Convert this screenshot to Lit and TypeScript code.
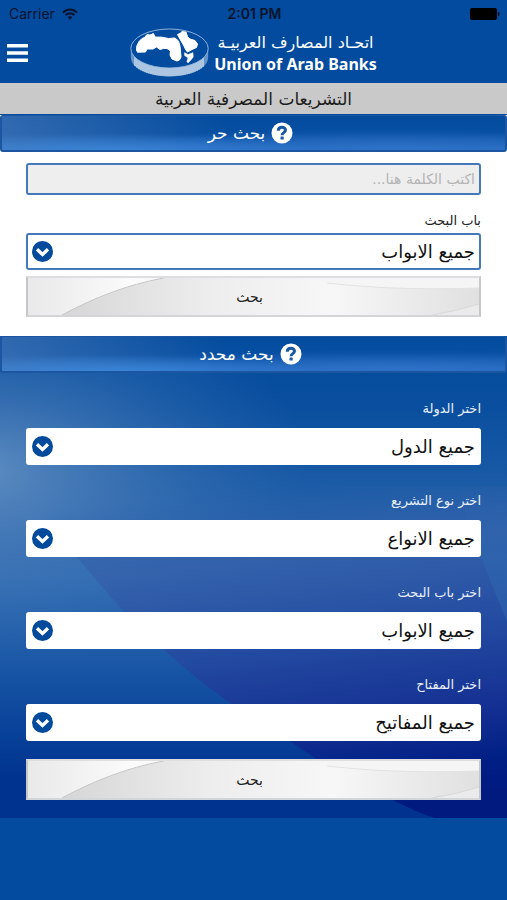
import { LitElement, html, css, svg } from "lit";
import { customElement, property } from "lit/decorators.js";

const base = css`
  :host {
    display: block;
    box-sizing: border-box;
    font-family: "DejaVu Sans", "Noto Sans", sans-serif;
  }
  *,
  *::before,
  *::after {
    box-sizing: border-box;
  }
`;

@customElement("status-bar")
class StatusBar extends LitElement {
  static styles = [
    base,
    css`
      .bar {
        display: grid;
        grid-template-columns: 1fr auto 1fr;
        align-items: center;
        height: 27px;
        padding: 0 7px 0 9px;
        font: 14px/20px Inter, sans-serif;
        color: #06142c;
      }
      .carrier {
        display: flex;
        align-items: center;
        gap: 7px;
      }
      .time {
        font-weight: 600;
      }
      .battery {
        justify-self: end;
      }
      svg {
        display: block;
      }
    `,
  ];

  render() {
    return html`
      <div class="bar">
        <span class="carrier">
          Carrier
          <svg width="16" height="12" viewBox="0 0 16 12" fill="none" stroke="#06142c" stroke-width="2" aria-hidden="true">
            <path d="M1 4.6C5 .4 11 .4 15 4.6" />
            <path d="M3.6 7.2C6.2 4.7 9.8 4.7 12.4 7.2" />
            <path d="M8 11.8 5.6 9.2C7 7.9 9 7.9 10.4 9.2Z" fill="#06142c" stroke="none" />
          </svg>
        </span>
        <span class="time">2:01 PM</span>
        <svg class="battery" width="30" height="12" viewBox="0 0 30 12" aria-hidden="true">
          <rect x="0" y="0" width="27" height="12" rx="2" fill="#000" />
          <path d="M28 4c2 .6 2 3.4 0 4z" fill="#000" />
        </svg>
      </div>
    `;
  }
}

@customElement("bank-header")
class BankHeader extends LitElement {
  static styles = [
    base,
    css`
      .header {
        display: grid;
        grid-template-columns: 1fr auto 1fr;
        align-items: center;
        height: 56px;
        padding: 0 7px 4px;
      }
      .menu {
        justify-self: start;
        padding: 0;
        border: 0;
        background: none;
        cursor: pointer;
      }
      svg {
        display: block;
      }
      .brand {
        display: flex;
        align-items: center;
        gap: 5px;
        color: #fff;
        text-decoration: none;
      }
      .names {
        display: flex;
        flex-direction: column;
        align-items: center;
        white-space: nowrap;
      }
      .arabic {
        font-size: 16px;
        line-height: 22px;
      }
      .english {
        font: 700 16px/20px "Noto Sans", sans-serif;
      }
    `,
  ];

  render() {
    const ridges = Array.from({ length: 35 }, (_, i) => {
      const x = 5 + i * 2;
      const t = (x - 39.5) / 38.7;
      const y = 20.5 + 19 * Math.sqrt(1 - t * t);
      return svg`<path d="M${x} ${y.toFixed(1)}v9" />`;
    });
    return html`
      <header class="header">
        <button class="menu" aria-label="القائمة">
          <svg width="21" height="18" viewBox="0 0 21 18" fill="#fff">
            <path d="M0 0h21v3.6H0zM0 7.2h21v3.6H0zM0 14.4h21V18H0z" />
          </svg>
        </button>
        <a class="brand" href="#">
          <svg width="79" height="50" viewBox="0 0 79 50" aria-hidden="true">
            <path d="M.8 20.5v8.500C.8 54.500 78.200 54.500 78.200 29v-8.500A38.700 19.500 0 0 1 .8 20.500Z" fill="#8fb2da" opacity=".7" />
            <g stroke="#f4f8fc" stroke-width="1">${ridges}</g>
            <ellipse cx="39.5" cy="20.5" rx="38.7" ry="19.5" fill="#024b9e" stroke="#9dbce0" stroke-width=".9" />
            <g fill="#fff" stroke="#fff" stroke-linejoin="round">
              <path
                d="M6.800 18 9 13.500 12 10.500 14.500 9.500 17 6.500 20 7 23.500 5.500 25 9 32 9.200 38.500 10.500 45 10 48.500 13 50 18 50.500 23 51 29 49.500 32 47 33 42 31 40 27 40.500 23 37 20.500 33.500 20.500 30 21.500 26.500 19 23 21 17 21 15.500 24 7.500 24.200 6.500 22Z"
              />
              <path d="M47.500 6.500 50 5.500 52 3.600 56 4 57.500 8.500 60 11 65 12.500 67.500 16 66.500 19.500 62 21.500 57.500 24 55.500 21.500 54 18 50.500 12Z" />
              <path d="M54.500 24.500 58 26.500 63 24.500 63.300 29 61 32 58 35 56.800 33.500 58 30 54.500 27.500Z" stroke-width=".4" />
            </g>
          </svg>
          <span class="names">
            <span class="arabic" lang="ar" dir="rtl">اتحـاد المصارف العربيـة</span>
            <span class="english">Union of Arab Banks</span>
          </span>
        </a>
      </header>
    `;
  }
}

@customElement("section-heading")
class SectionHeading extends LitElement {
  @property() text = "";

  static styles = [
    base,
    css`
      .heading {
        display: flex;
        align-items: center;
        justify-content: center;
        gap: 6px;
        height: 37px;
        margin: 0;
        padding-inline-start: 6px;
        border: 1px solid #1c56a2;
        border-width: 1px 2px 2px;
        border-radius: 3px;
        background:
          radial-gradient(ellipse 200px 16px at 22% 100%, #3d8be0b0, transparent),
          radial-gradient(ellipse 260px 18px at 78% 90%, #3b7bd480, transparent),
          linear-gradient(90deg, #5d86c080, transparent 45%),
          linear-gradient(#034b9d, #074fa2 50%, #2269bd 95%);
        color: #fff;
        font-size: 17px;
        font-weight: 400;
        line-height: 24px;
      }
      svg {
        display: block;
      }
    `,
  ];

  render() {
    return html`
      <h2 class="heading">
        <svg width="22" height="22" viewBox="0 0 22 22" aria-hidden="true">
          <circle cx="11" cy="11" r="10.500" fill="#fff" />
          <path d="M7.300 8.700C7.400 4.200 14.500 4.300 14.500 8.100 14.500 10.700 11.100 10.500 11.100 13.200" fill="none" stroke="#1a58a6" stroke-width="3" />
          <rect x="9.500" y="14.400" width="3.200" height="3.200" rx=".6" fill="#1a58a6" />
        </svg>
        <span>${this.text}</span>
      </h2>
    `;
  }
}

@customElement("select-field")
class SelectField extends LitElement {
  @property() label = "";
  @property() value = "";
  @property({ type: Boolean, reflect: true }) outlined = false;

  static styles = [
    base,
    css`
      .label {
        display: block;
        height: 24px;
        margin-bottom: 7px;
        color: #e9f0fa;
        font-size: 13px;
        line-height: 24px;
      }
      .box {
        position: relative;
      }
      .select {
        display: block;
        appearance: none;
        width: 100%;
        height: 37px;
        margin: 0;
        padding: 0 6px;
        border: 0;
        border-radius: 3px;
        background: #fff;
        color: #111;
        font: 18px/24px "DejaVu Sans", "Noto Sans", sans-serif;
      }
      .chevron {
        position: absolute;
        left: 6px;
        top: 8px;
        pointer-events: none;
      }
      :host([outlined]) .label {
        margin-bottom: 0;
        color: #222;
      }
      :host([outlined]) .select {
        border: 2px solid #4379b8;
        padding: 0 4px;
      }
    `,
  ];

  render() {
    return html`
      <label class="label" for="choice">${this.label}</label>
      <div class="box">
        <select class="select" id="choice">
          <option>${this.value}</option>
        </select>
        <svg class="chevron" width="21" height="21" viewBox="0 0 21 21" aria-hidden="true">
          <circle cx="10.500" cy="10.500" r="10.500" fill="#024a9c" />
          <path d="M5 8.300l5.500 5.200L16 8.300" fill="none" stroke="#fff" stroke-width="3.400" />
        </svg>
      </div>
    `;
  }
}

@customElement("search-button")
class SearchButton extends LitElement {
  static styles = [
    base,
    css`
      .button {
        display: grid;
        place-items: center;
        width: 100%;
        height: 41px;
        padding: 0;
        border: 2px solid;
        border-color: #dcdedf #c4c8ca #d3d5d6;
        background: #eee;
        color: #222;
        font: 14px/20px "DejaVu Sans", "Noto Sans", sans-serif;
        cursor: pointer;
      }
      .sheen,
      .text {
        grid-area: 1 / 1;
      }
      .sheen {
        display: block;
        width: 100%;
        height: 37px;
      }
      .text {
        padding-right: 8px;
      }
    `,
  ];

  render() {
    return html`
      <button class="button">
        <svg class="sheen" viewBox="0 0 452 37" preserveAspectRatio="none" aria-hidden="true">
          <defs>
            <linearGradient id="left" x1="0" x2="1">
              <stop offset="0" stop-color="#e9e9e9" />
              <stop offset=".7" stop-color="#fbfbfb" />
              <stop offset="1" stop-color="#f4f4f4" />
            </linearGradient>
            <linearGradient id="mid" x1="0" x2="1">
              <stop offset="0" stop-color="#d6d6d6" />
              <stop offset=".35" stop-color="#ededed" />
              <stop offset=".65" stop-color="#f7f7f7" />
              <stop offset="1" stop-color="#e0e0e0" />
            </linearGradient>
          </defs>
          <rect width="150" height="37" fill="url(#left)" />
          <path d="M34 37C66 20 98 7 136 0H452v37Z" fill="url(#mid)" />
          <path d="M34 37C66 20 98 7 136 0" fill="none" stroke="#c6c6c6" />
          <path d="M280 2C330 9 390 12 452 10V0H280Z" fill="#f5f5f5" />
          <path d="M300 5C345 10 390 12 452 10" fill="none" stroke="#e2e2e2" />
          <path d="M405 37Q430 33 452 26V37Z" fill="#ebebeb" />
          <path d="M405 37Q430 33 452 26" fill="none" stroke="#d8d8d8" />
        </svg>
        <span class="text">بحث</span>
      </button>
    `;
  }
}

@customElement("app-root")
class AppRoot extends LitElement {
  static styles = [
    base,
    css`
      :host {
        min-height: 100vh;
        background: #024b9e;
      }
      .title {
        height: 31px;
        margin: 0 0 1px;
        background: #c9c9c9;
        color: #1c1c1c;
        font-size: 17px;
        font-weight: 400;
        line-height: 32px;
        text-align: center;
      }
      .free {
        padding-bottom: 19px;
        background: #fff;
      }
      .fields {
        display: flex;
        flex-direction: column;
        padding: 11px 26px 0;
      }
      .query {
        width: 100%;
        height: 32px;
        margin: 0 0 14px;
        padding: 0 4px;
        border: 2px solid #4379b8;
        border-radius: 3px;
        background: #eee;
        color: #222;
        font: 14px/20px "DejaVu Sans", "Noto Sans", sans-serif;
      }
      .query::placeholder {
        color: #b4b4b4;
        opacity: 1;
      }
      .free-button {
        margin-top: 6px;
      }
      .specific {
        position: relative;
      }
      .backdrop {
        position: absolute;
        inset: 0;
        width: 100%;
        height: 100%;
      }
      .content {
        position: relative;
      }
      .filters {
        display: flex;
        flex-direction: column;
        gap: 24px;
        padding: 24px 26px 18px;
      }
      .filter-button {
        margin-top: -6px;
      }
    `,
  ];

  private filters = [
    { label: "اختر الدولة", value: "جميع الدول" },
    { label: "اختر نوع التشريع", value: "جميع الانواع" },
    { label: "اختر باب البحث", value: "جميع الابواب" },
    { label: "اختر المفتاح", value: "جميع المفاتيح" },
  ];

  render() {
    return html`
      <status-bar></status-bar>
      <bank-header></bank-header>
      <main lang="ar" dir="rtl">
        <h1 class="title">التشريعات المصرفية العربية</h1>
        <section class="free">
          <section-heading text="بحث حر"></section-heading>
          <div class="fields">
            <input class="query" type="text" aria-label="اكتب الكلمة هنا" placeholder="اكتب الكلمة هنا..." />
            <select-field outlined label="باب البحث" value="جميع الابواب"></select-field>
            <search-button class="free-button"></search-button>
          </div>
        </section>
        <section class="specific">
          <svg class="backdrop" viewBox="0 0 507 481" preserveAspectRatio="none" aria-hidden="true">
            <defs>
              <linearGradient id="sky" x1="0" y1="0" x2="0" y2="1">
                <stop offset="0" stop-color="#034b9d" />
                <stop offset=".15" stop-color="#0a4f9f" />
                <stop offset=".35" stop-color="#1f5ea8" />
                <stop offset=".5" stop-color="#2c68b0" />
                <stop offset=".65" stop-color="#1e5ba8" />
                <stop offset=".8" stop-color="#0a459b" />
                <stop offset=".92" stop-color="#00328f" />
                <stop offset="1" stop-color="#00338f" />
              </linearGradient>
              <radialGradient id="glow" gradientUnits="userSpaceOnUse" cx="0" cy="0" r="1" gradientTransform="translate(-20 135) scale(330 190)">
                <stop offset="0" stop-color="#6f9ac8" stop-opacity=".8" />
                <stop offset=".4" stop-color="#5a88bf" stop-opacity=".5" />
                <stop offset="1" stop-color="#3b74b6" stop-opacity="0" />
              </radialGradient>
              <linearGradient id="wave" gradientUnits="userSpaceOnUse" x1="250" y1="150" x2="290" y2="480">
                <stop offset="0" stop-color="#2c5fa8" stop-opacity="0" />
                <stop offset=".22" stop-color="#3560aa" stop-opacity=".8" />
                <stop offset=".5" stop-color="#234aa1" />
                <stop offset=".75" stop-color="#142f92" />
                <stop offset=".9" stop-color="#001f85" />
                <stop offset="1" stop-color="#001a80" />
              </linearGradient>
              <linearGradient id="edge" gradientUnits="userSpaceOnUse" x1="0" y1="150" x2="0" y2="290">
                <stop offset="0" stop-color="#2d66ae" stop-opacity="0" />
                <stop offset=".5" stop-color="#2d66ae" stop-opacity=".7" />
                <stop offset="1" stop-color="#2d5fac" stop-opacity=".7" />
              </linearGradient>
            </defs>
            <rect width="507" height="481" fill="url(#sky)" />
            <rect width="507" height="481" fill="url(#glow)" />
            <path d="M28 150C50 190 80 225 123 274 150 300 185 335 230 366 260 386 290 404 315 421 350 440 400 470 435 481H507V150Z" fill="url(#wave)" />
            <path d="M455 150Q482 225 507 285V150Z" fill="url(#edge)" />
          </svg>
          <div class="content">
            <section-heading text="بحث محدد"></section-heading>
            <div class="filters">
              ${this.filters.map(
                (f) => html`<select-field label=${f.label} value=${f.value}></select-field>`
              )}
              <search-button class="filter-button"></search-button>
            </div>
          </div>
        </section>
      </main>
    `;
  }
}
